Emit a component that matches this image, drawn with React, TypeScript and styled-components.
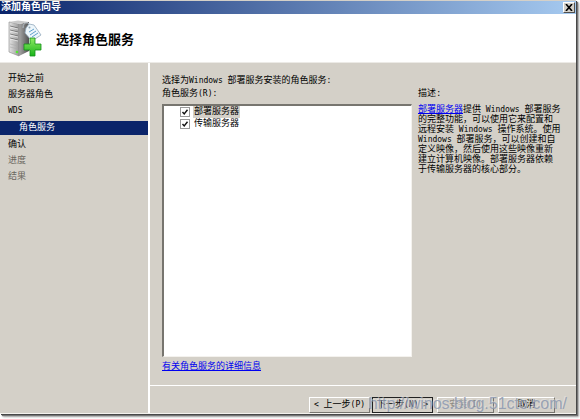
import React, { useState } from "react";
import styled, { createGlobalStyle } from "styled-components";

const face = "#d4d0c8";

const GlobalStyle = createGlobalStyle`
  * { box-sizing: border-box; }
  html, body, #root { height: 100%; }
  body {
    margin: 0;
    overflow: hidden;
    background: #fff;
    color: #000;
    font: 9px/11px "Liberation Mono", "Noto Sans CJK SC", monospace;
  }
`;

const Desktop = styled.div`
  height: 100%;
  padding: 0 4px 5px 0;
`;

const Window = styled.main`
  position: relative;
  display: flex;
  flex-direction: column;
  height: 100%;
  background: ${face};
  border-top: 1px solid ${face};
  border-bottom: 1px solid #f4f2ee;
  box-shadow: 1px 1px 0 #484848, 2px 2px 1px #777, 3px 3px 2px #aaa;
`;

const TitleBar = styled.header`
  display: flex;
  align-items: center;
  justify-content: space-between;
  height: 13px;
  flex: none;
  padding: 0 1px;
  background: linear-gradient(90deg, #0a246a, #a6caf0);
  color: #fff;
  font-weight: 700;
  font-size: 10px;
  line-height: 13px;
`;

const CloseButton = styled.button`
  display: grid;
  place-items: center;
  width: 12px;
  height: 11px;
  padding: 0;
  background: ${face};
  border: 1px solid;
  border-color: #fff #505050 #505050 #fff;
`;

const Banner = styled.section`
  display: flex;
  align-items: center;
  gap: 14px;
  height: 49px;
  flex: none;
  padding: 2px 8px 0;
  background: #fff;
  border-bottom: 1px solid #eceae6;
`;

const Heading = styled.h1`
  margin: 0;
  padding-top: 3px;
  font-size: 13px;
  line-height: 18px;
  font-weight: 700;
`;

const Body = styled.div`
  display: flex;
  flex: 1;
  min-height: 0;
`;

const Steps = styled.nav`
  width: 150px;
  flex: none;
  padding-top: 9px;
  border-right: 2px solid #fff;
`;

const Step = styled.div<{ $state?: "current" | "pending" }>`
  height: 14px;
  margin: ${(p) => (p.$state === "current" ? "3px 0" : "0 0 2px")};
  padding-left: ${(p) => (p.$state === "current" ? 19 : 8)}px;
  line-height: 14px;
  background: ${(p) => (p.$state === "current" ? "#0a246a" : "transparent")};
  color: ${(p) =>
    p.$state === "current" ? "#fff" : p.$state === "pending" ? "#6b675f" : "#000"};
`;

const Latin = styled.span`
  font-family: "DejaVu Sans Mono", monospace;
  font-size: 8px;
  line-height: 8px;
`;

const Content = styled.div`
  display: flex;
  flex-direction: column;
  flex: 1;
  min-width: 0;
`;

const Page = styled.section`
  display: grid;
  grid-template-columns: 250px minmax(0, 1fr);
  column-gap: 6px;
  flex: 1;
  min-height: 0;
  padding: 13px 13px 12px 12px;
`;

const Column = styled.div`
  display: flex;
  flex-direction: column;
  min-width: 0;
`;

const Text = styled.p`
  margin: 0 0 2px;
  line-height: 11px;
  white-space: nowrap;
`;

const RoleList = styled.div`
  flex: 1;
  margin: 2px 0 5px;
  padding-left: 16px;
  background: #fff;
  border: 1px solid;
  border-width: 2px 1px 1px 2px;
  border-color: #77756f #f4f2ee #f4f2ee #77756f;
`;

const Role = styled.label`
  display: flex;
  align-items: center;
  gap: 3px;
  height: 12px;
`;

const RoleName = styled.span<{ $selected?: boolean }>`
  padding: 0 1px;
  line-height: 12px;
  background: ${(p) => (p.$selected ? face : "transparent")};
`;

const CheckBox = styled.input`
  appearance: none;
  width: 10px;
  height: 10px;
  margin: 0;
  background: #fff;
  border: 1px solid #999;

  &:checked {
    background: #fff
      url("data:image/svg+xml,%3Csvg xmlns='http://www.w3.org/2000/svg' viewBox='0 0 8 8'%3E%3Cpath d='M1.5 4l1.7 2L6.5 1.7' fill='none' stroke='%23111' stroke-width='1.4'/%3E%3C/svg%3E");
  }
`;

const Link = styled.a`
  color: #0000f0;
  text-decoration: underline;
`;

const Description = styled.aside`
  padding-top: 13px;
  min-width: 0;
`;

const DescriptionText = styled.p`
  margin: 5px 0 0;
  line-height: 10px;
  white-space: nowrap;
`;

const Footer = styled.footer`
  display: flex;
  justify-content: flex-end;
  gap: 2px;
  height: 28px;
  flex: none;
  padding: 11px 21px 0 0;
  border-top: 1px solid #fff;
`;

const PushButton = styled.button<{ $default?: boolean; $spaced?: boolean }>`
  width: ${(p) => (p.$spaced ? 57 : 61)}px;
  height: 16px;
  margin-left: ${(p) => (p.$spaced ? 2 : 0)}px;
  padding: 0;
  background: ${face};
  border: 1px solid;
  border-color: ${(p) => (p.$default ? "#222" : "#fff #77756f #77756f #fff")};
  color: #000;
  font: inherit;
  white-space: nowrap;

  &:disabled {
    color: #8c8982;
  }
`;

const Watermark = styled.div`
  position: absolute;
  right: 9px;
  bottom: 0;
  color: rgba(140, 152, 176, 0.85);
  font: 16px/18px "Liberation Sans", sans-serif;
  text-shadow: -1px -1px 0 rgba(235, 235, 235, 0.5);
  pointer-events: none;
`;

function ServerIcon() {
  return (
    <svg width="34" height="38" viewBox="0 0 34 38" aria-hidden="true">
      <defs>
        <linearGradient id="side" x2="1">
          <stop stopColor="#a8a8a8" />
          <stop offset="1" stopColor="#505050" />
        </linearGradient>
        <linearGradient id="front" x2="1">
          <stop stopColor="#e4e4e4" />
          <stop offset="1" stopColor="#999" />
        </linearGradient>
        <linearGradient id="plus" x2="0" y2="1">
          <stop stopColor="#8eea63" />
          <stop offset="1" stopColor="#19b41a" />
        </linearGradient>
      </defs>
      <path d="M11 4l10-2v29l-10 5z" fill="url(#side)" />
      <path d="M1 2l10 2v32L1 32z" fill="url(#front)" stroke="#888" strokeWidth=".6" />
      <path d="M1 2l9-1.5L21 2l-10 2z" fill="#c9c9c9" />
      <path d="M2 6l8 2M2 10l8 2M2 14l8 2M2 18l8 2" stroke="#777" />
      <path d="M2 7l8 2M2 11l8 2M2 15l8 2M2 19l8 2" stroke="#f4f4f4" strokeWidth=".7" />
      <path d="M2 24l8 2M2 27l8 2" stroke="#aaa" strokeWidth=".6" />
      <circle cx="9" cy="32" r="1.3" fill="#55e931" />
      <path d="M15 8q0-6 5-5l3 3" fill="none" stroke="#b4bdc5" />
      <path d="M18 8l3-4 5 1 7 10-9 6-7-8z" fill="#edf6fb" stroke="#93aabc" strokeWidth=".8" />
      <circle cx="21.5" cy="7.5" r="1" fill="#8fa6b5" />
      <path d="M21 12l5-3M22 15l6-4M24 17l6-4" stroke="#61a0cc" />
      <path d="M22 18h5v6h6v6h-6v6h-5v-6h-6v-6h6z" fill="url(#plus)" stroke="#159019" strokeWidth=".8" />
    </svg>
  );
}

export default function App() {
  const [roles, setRoles] = useState([true, true]);
  const toggle = (index: number) =>
    setRoles(roles.map((value, i) => (i === index ? !value : value)));

  return (
    <Desktop>
      <GlobalStyle />
      <Window>
        <TitleBar>
          添加角色向导
          <CloseButton aria-label="关闭">
            <svg width="8" height="7" viewBox="0 0 8 7">
              <path d="M1 0l6 7M7 0L1 7" stroke="#000" strokeWidth="1.6" />
            </svg>
          </CloseButton>
        </TitleBar>
        <Banner>
          <ServerIcon />
          <Heading>选择角色服务</Heading>
        </Banner>
        <Body>
          <Steps>
            <Step>开始之前</Step>
            <Step>服务器角色</Step>
            <Step><Latin>WDS</Latin></Step>
            <Step $state="current" aria-current="step">角色服务</Step>
            <Step>确认</Step>
            <Step $state="pending">进度</Step>
            <Step $state="pending">结果</Step>
          </Steps>
          <Content>
            <Page>
              <Column>
                <Text>选择为<Latin>Windows </Latin>部署服务安装的角色服务<Latin>:</Latin></Text>
                <Text>角色服务<Latin>(R):</Latin></Text>
                <RoleList>
                  {["部署服务器", "传输服务器"].map((name, i) => (
                    <Role key={name}>
                      <CheckBox type="checkbox" checked={roles[i]} onChange={() => toggle(i)} />
                      <RoleName $selected={i === 0}>{name}</RoleName>
                    </Role>
                  ))}
                </RoleList>
                <div>
                  <Link href="#details">有关角色服务的详细信息</Link>
                </div>
              </Column>
              <Description>
                <Text>描述:</Text>
                <DescriptionText>
                  <Link href="#deployment">部署服务器</Link>提供<Latin> Windows </Latin>部署服务
                  <br />的完整功能，可以使用它来配置和
                  <br />远程安装<Latin> Windows </Latin>操作系统。使用
                  <br /><Latin>Windows </Latin>部署服务，可以创建和自
                  <br />定义映像，然后使用这些映像重新
                  <br />建立计算机映像。部署服务器依赖
                  <br />于传输服务器的核心部分。
                </DescriptionText>
              </Description>
            </Page>
            <Footer>
              <PushButton><Latin>&lt; </Latin>上一步<Latin>(P)</Latin></PushButton>
              <PushButton $default>下一步<Latin>(N) &gt;</Latin></PushButton>
              <PushButton $spaced disabled>安装<Latin>(I)</Latin></PushButton>
              <PushButton $spaced>取消</PushButton>
            </Footer>
          </Content>
        </Body>
        <Watermark>http://winos.blog.51cto.com/</Watermark>
      </Window>
    </Desktop>
  );
}
